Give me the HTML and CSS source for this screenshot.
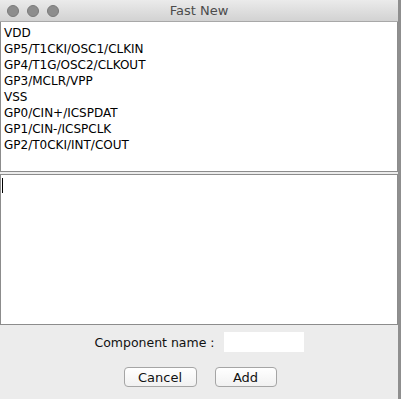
FILE: index.html
```html
<!DOCTYPE html>
<html lang="en">
<head>
  <meta charset="UTF-8" />
  <title>Fast New</title>
  <link rel="stylesheet" href="styles.css">
</head>
<body>
  <div class="window">
    <div class="titlebar">
      <div class="lights">
        <span class="light"></span>
        <span class="light"></span>
        <span class="light"></span>
      </div>
      <div class="title">Fast New</div>
    </div>
    <div class="pins">
      <div>VDD</div>
      <div>GP5/T1CKI/OSC1/CLKIN</div>
      <div>GP4/T1G/OSC2/CLKOUT</div>
      <div>GP3/MCLR/VPP</div>
      <div>VSS</div>
      <div>GP0/CIN+/ICSPDAT</div>
      <div>GP1/CIN-/ICSPCLK</div>
      <div>GP2/T0CKI/INT/COUT</div>
    </div>
    <div class="editor"><span class="caret"></span></div>
    <div class="footer">
      <div class="name-row">
        <label>Component name :</label>
        <div class="name-input"></div>
      </div>
      <div class="buttons">
        <button class="btn cancel">Cancel</button>
        <button class="btn add">Add</button>
      </div>
    </div>
  </div>
</body>
</html>
```

FILE: styles.css
```css
* {
  box-sizing: border-box;
  margin: 0;
  padding: 0;
}

body {
  width: 401px;
  height: 399px;
  background: #fff;
  font-family: 'DejaVu Sans', sans-serif;
  font-size: 12px;
  color: #000;
  overflow: hidden;
}

.window {
  width: 401px;
  height: 399px;
  background: #ececec;
  border-right: 3px solid #8f8f8f;
  display: flex;
  flex-direction: column;
}

.titlebar {
  height: 22px;
  background: linear-gradient(#ebebeb, #d2d2d2);
  border-bottom: 1px solid #a8a8a8;
  position: relative;
  display: flex;
  align-items: center;
  justify-content: center;
}

.lights {
  position: absolute;
  left: 7px;
  top: 5px;
  display: flex;
  gap: 8px;
}

.light {
  width: 12px;
  height: 12px;
  border-radius: 50%;
  background: #8d8d8d;
  border: 1px solid #7a7a7a;
}

.title {
  font-size: 13px;
  color: #4c4c4c;
}

.pins {
  height: 150px;
  background: #fff;
  border: 1px solid #8c8c8c;
  border-top: none;
  padding: 3px 3px;
  line-height: 16px;
}

.editor {
  height: 151px;
  margin-top: 2px;
  background: #fff;
  border: 1px solid #8c8c8c;
  padding: 3px 1px;
}

.caret {
  display: block;
  width: 1px;
  height: 15px;
  background: #000;
}

.footer {
  flex: 1;
  display: flex;
  flex-direction: column;
  align-items: center;
  padding-top: 7px;
}

.name-row {
  display: flex;
  align-items: center;
  gap: 9px;
}

.name-row label {
  font-size: 12.5px;
  color: #111;
}

.name-input {
  width: 80px;
  height: 20px;
  background: #fff;
}

.buttons {
  display: flex;
  gap: 18px;
  margin-top: 15px;
  margin-left: 2px;
}

.btn {
  height: 20px;
  font-family: 'DejaVu Sans', sans-serif;
  font-size: 13px;
  color: #111;
  background: linear-gradient(#ffffff, #f1f1f1);
  border: 1px solid #a5a5a5;
  border-radius: 4px;
}

.cancel {
  width: 73px;
}

.add {
  width: 62px;
}
```
